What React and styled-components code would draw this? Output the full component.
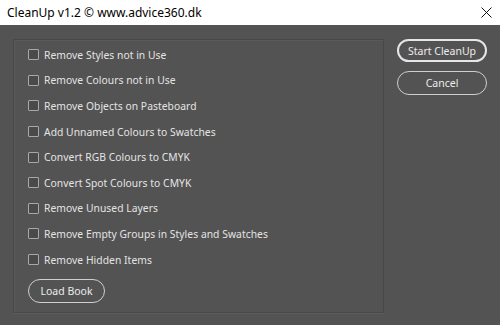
import React, { useState } from 'react';
import styled, { createGlobalStyle } from 'styled-components';

const GlobalStyle = createGlobalStyle`
  html, body {
    margin: 0;
    padding: 0;
    background: #535353;
  }
  * {
    box-sizing: border-box;
  }
`;

const Window = styled.div`
  width: 500px;
  height: 325px;
  display: flex;
  flex-direction: column;
  background: #535353;
  font-family: 'Noto Sans', 'Open Sans', sans-serif;
  overflow: hidden;
`;

const TitleBar = styled.div`
  height: 25px;
  flex: none;
  display: flex;
  align-items: center;
  justify-content: space-between;
  background: #ffffff;
  padding: 0 6px 0 7px;
  color: #000;
  font-size: 12px;
`;

const CloseButton = styled.button`
  border: none;
  background: transparent;
  padding: 0;
  width: 16px;
  height: 16px;
  display: flex;
  align-items: center;
  justify-content: center;
  cursor: pointer;
`;

const Body = styled.div`
  flex: 1;
  display: flex;
  align-items: flex-start;
  gap: 13px;
  padding: 14px 13px 0 13px;
`;

const Panel = styled.div`
  width: 371px;
  height: 274px;
  border: 1px solid #484848;
  box-shadow: inset 1px 1px 0 #5a5a5a, 0 1px 0 #5c5c5c;
  padding: 2px 14px 0 14px;
  display: flex;
  flex-direction: column;
`;

const Row = styled.label`
  height: 25.6px;
  display: flex;
  align-items: center;
  gap: 5px;
  color: #e4e4e4;
  font-size: 10.3px;
  letter-spacing: 0.05px;
  cursor: pointer;
`;

const Box = styled.span`
  width: 11px;
  height: 11px;
  border: 1px solid #a8a8a8;
  border-radius: 1px;
  background: ${(p) => (p.checked ? '#a8a8a8' : '#4a4a4a')};
  flex: none;
`;

const Pill = styled.button`
  height: ${(p) => p.h || 24}px;
  width: ${(p) => p.w}px;
  border-radius: 12px;
  border: ${(p) => (p.primary ? '2px solid #e6e6e6' : '1px solid #cfcfcf')};
  background: #535353;
  color: #ececec;
  font-family: 'Noto Sans', 'Open Sans', sans-serif;
  font-size: 10.5px;
  padding: 0;
  cursor: pointer;
`;

const LoadBook = styled(Pill)`
  margin-top: 7px;
  align-self: flex-start;
  border: 1px solid #cfcfcf;
`;

const ButtonColumn = styled.div`
  display: flex;
  flex-direction: column;
  gap: 9px;
`;

const options = [
  'Remove Styles not in Use',
  'Remove Colours not in Use',
  'Remove Objects on Pasteboard',
  'Add Unnamed Colours to Swatches',
  'Convert RGB Colours to CMYK',
  'Convert Spot Colours to CMYK',
  'Remove Unused Layers',
  'Remove Empty Groups in Styles and Swatches',
  'Remove Hidden Items',
];

const App = () => {
  const [checked, setChecked] = useState({});

  const toggle = (opt) => {
    setChecked({ ...checked, [opt]: !checked[opt] });
  };

  return (
    <>
      <GlobalStyle />
      <Window>
        <TitleBar>
          <span>CleanUp v1.2 © www.advice360.dk</span>
          <CloseButton>
            <svg width="11" height="11" viewBox="0 0 11 11">
              <path d="M0.5 0.5 L10.5 10.5 M10.5 0.5 L0.5 10.5" stroke="#111" strokeWidth="1" />
            </svg>
          </CloseButton>
        </TitleBar>
        <Body>
          <Panel>
            {options.map((opt) => (
              <Row key={opt} onClick={() => toggle(opt)}>
                <Box checked={checked[opt]} />
                {opt}
              </Row>
            ))}
            <LoadBook w={77}>Load Book</LoadBook>
          </Panel>
          <ButtonColumn>
            <Pill primary w={90} h={23}>Start CleanUp</Pill>
            <Pill w={90} h={24}>Cancel</Pill>
          </ButtonColumn>
        </Body>
      </Window>
    </>
  );
};

export default App;
